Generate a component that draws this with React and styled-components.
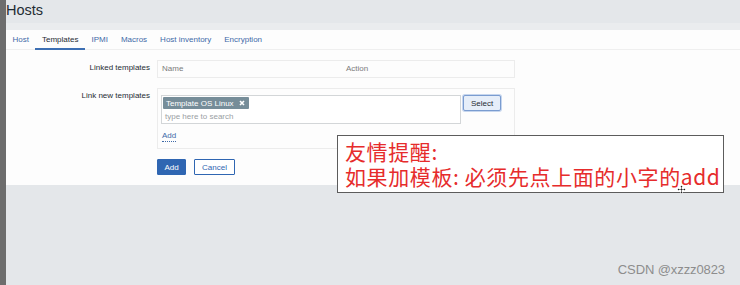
import React from "react";
import styled, { createGlobalStyle } from "styled-components";

const GlobalStyle = createGlobalStyle`
  html, body {
    margin: 0;
    padding: 0;
    background: #e4e7ea;
  }
  body {
    font-family: Arial, "Liberation Sans", sans-serif;
  }
`;

const Page = styled.div`
  position: relative;
  display: flex;
  width: 740px;
  height: 285px;
  overflow: hidden;
`;

const SideStrip = styled.div`
  width: 6px;
  background: #6d6d6d;
`;

const Main = styled.div`
  flex: 1;
  display: flex;
  flex-direction: column;
  background: #e4e7ea;
`;

const Header = styled.div`
  height: 23px;
  display: flex;
  align-items: flex-start;
  border-bottom: 7px solid #eaecee;
`;

const Title = styled.h1`
  margin: 0;
  padding-top: 2px;
  font-family: "Liberation Sans", Arial, sans-serif;
  font-size: 14.5px;
  font-weight: normal;
  color: #1f2c33;
  line-height: 16px;
`;

const Panel = styled.div`
  background: #fdfdfd;
  height: 155px;
  display: flex;
  flex-direction: column;
`;

const TabBar = styled.div`
  display: flex;
  height: 20px;
  border-bottom: 1px solid #efefef;
  box-sizing: border-box;
`;

const Tab = styled.div`
  padding: 0 6.5px;
  font-size: 8px;
  line-height: 20px;
  color: ${(p) => (p.$active ? "#1f2c33" : "#3f6aa8")};
  border-bottom: 2px solid ${(p) => (p.$active ? "#3d6fb3" : "transparent")};
  margin-bottom: -1px;
  white-space: nowrap;
`;

const Form = styled.div`
  display: flex;
  flex-direction: column;
  gap: 10px;
  padding-top: 10px;
`;

const Row = styled.div`
  display: grid;
  grid-template-columns: 144px 358px;
  column-gap: 7px;
  align-items: start;
`;

const Label = styled.div`
  text-align: right;
  font-size: 8px;
  color: #1f2c33;
  line-height: 10px;
  padding-top: ${(p) => p.$top}px;
`;

const TableBox = styled.div`
  display: grid;
  grid-template-columns: 184px 1fr;
  height: 18px;
  border: 1px solid #ececec;
  box-sizing: border-box;
  font-size: 8px;
  color: #7b7b7b;
  line-height: 16px;
`;

const Cell = styled.div`
  padding-left: 4px;
`;

const LinkBox = styled.div`
  border: 1px solid #ececec;
  box-sizing: border-box;
  height: 61px;
  padding: 6px 3px 0;
  display: flex;
  flex-direction: column;
`;

const SelectRow = styled.div`
  display: flex;
  gap: 2px;
  align-items: flex-start;
`;

const MultiInput = styled.div`
  width: 300px;
  height: 29px;
  box-sizing: border-box;
  border: 1px solid #d3d6d8;
  background: #fff;
  padding: 1px 1px;
  display: flex;
  flex-direction: column;
  gap: 2px;
`;

const Chip = styled.span`
  align-self: flex-start;
  display: inline-flex;
  align-items: center;
  gap: 5px;
  height: 12px;
  padding: 0 4px 0 3px;
  background: #768d99;
  color: #fff;
  font-size: 8px;
  border-radius: 1px;
`;

const Placeholder = styled.span`
  padding-left: 2px;
  font-size: 8px;
  color: #9aa0a4;
  line-height: 11px;
`;

const SelectButton = styled.button`
  width: 38px;
  height: 16px;
  padding: 0;
  font-family: inherit;
  font-size: 8px;
  color: #1f2c33;
  background: #e6eef9;
  border: 1px solid #7a9cd0;
  border-radius: 2px;
  box-shadow: 0 0 0 1px #c6d6ee;
`;

const AddLink = styled.span`
  align-self: flex-start;
  margin-top: 7px;
  margin-left: 1px;
  font-size: 8px;
  color: #3f6aa8;
  line-height: 10px;
  border-bottom: 1px dotted #3f6aa8;
`;

const Buttons = styled.div`
  display: flex;
  gap: 8px;
  padding-left: 151px;
`;

const Button = styled.button`
  height: 16px;
  width: ${(p) => p.$w}px;
  padding: 0;
  font-family: inherit;
  font-size: 8px;
  border-radius: 1px;
  border: 1px solid #2f66b2;
  background: ${(p) => (p.$primary ? "#2f66b2" : "#ffffff")};
  color: ${(p) => (p.$primary ? "#ffffff" : "#2f66b2")};
`;

const Note = styled.div`
  position: absolute;
  left: 337px;
  top: 135px;
  width: 387px;
  height: 58px;
  box-sizing: border-box;
  background: #ffffff;
  border: 1px solid #5c5c5c;
  padding: 3px 0 0 7px;
  font-family: "Noto Sans CJK SC", "Noto Sans", sans-serif;
  font-size: 21px;
  line-height: 25px;
  letter-spacing: 0.6px;
  color: #e62c2c;
  white-space: nowrap;
`;

const NoteLine = styled.div`
  height: 25px;
`;

const Cursor = styled.svg`
  position: absolute;
  left: 677px;
  top: 185px;
`;

const Watermark = styled.div`
  position: absolute;
  right: 15px;
  top: 262px;
  font-family: "Liberation Sans", Arial, sans-serif;
  font-size: 13px;
  color: #8d8d8d;
  letter-spacing: -0.1px;
`;

const tabs = ["Host", "Templates", "IPMI", "Macros", "Host inventory", "Encryption"];

export default function App() {
  return (
    <Page>
      <GlobalStyle />
      <SideStrip />
      <Main>
        <Header>
          <Title>Hosts</Title>
        </Header>
        <Panel>
          <TabBar>
            {tabs.map((t) => (
              <Tab key={t} $active={t === "Templates"}>
                {t}
              </Tab>
            ))}
          </TabBar>
          <Form>
            <Row>
              <Label $top={3}>Linked templates</Label>
              <TableBox>
                <Cell>Name</Cell>
                <Cell>Action</Cell>
              </TableBox>
            </Row>
            <Row>
              <Label $top={3}>Link new templates</Label>
              <LinkBox>
                <SelectRow>
                  <MultiInput>
                    <Chip>
                      Template OS Linux
                      <svg width="6" height="6" viewBox="0 0 6 6">
                        <path d="M1 1L5 5M5 1L1 5" stroke="#fff" strokeWidth="1.6" />
                      </svg>
                    </Chip>
                    <Placeholder>type here to search</Placeholder>
                  </MultiInput>
                  <SelectButton>Select</SelectButton>
                </SelectRow>
                <AddLink>Add</AddLink>
              </LinkBox>
            </Row>
            <Buttons>
              <Button $primary $w={29}>Add</Button>
              <Button $w={41}>Cancel</Button>
            </Buttons>
          </Form>
        </Panel>
      </Main>
      <Note>
        <NoteLine>友情提醒:</NoteLine>
        <NoteLine>如果加模板: 必须先点上面的小字的add</NoteLine>
      </Note>
      <Cursor width="9" height="9" viewBox="0 0 9 9">
        <path
          d="M4.5 0.5L6 2H5V4H7V3L8.5 4.5L7 6V5H5V7H6L4.5 8.5L3 7H4V5H2V6L0.5 4.5L2 3V4H4V2H3Z"
          fill="#222"
          stroke="#fff"
          strokeWidth="0.5"
        />
      </Cursor>
      <Watermark>CSDN @xzzz0823</Watermark>
    </Page>
  );
}
